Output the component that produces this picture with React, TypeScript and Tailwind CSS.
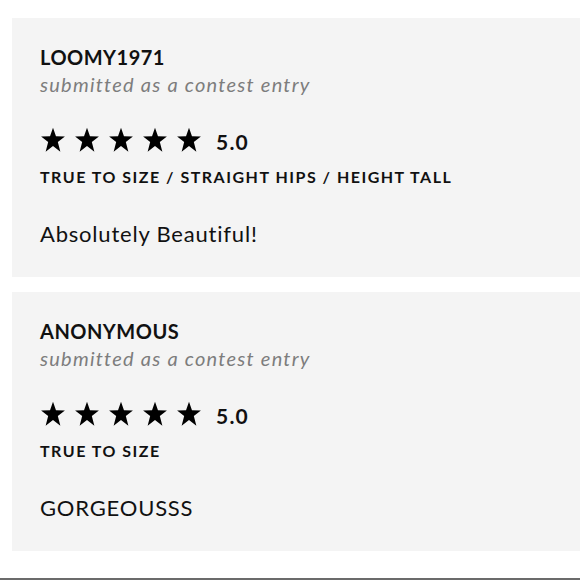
const reviews = [
  {
    name: 'LOOMY1971',
    rating: '5.0',
    fit: 'TRUE TO SIZE / STRAIGHT HIPS / HEIGHT TALL',
    body: 'Absolutely Beautiful!',
  },
  {
    name: 'ANONYMOUS',
    rating: '5.0',
    fit: 'TRUE TO SIZE',
    body: 'GORGEOUSSS',
  },
];

function Star() {
  return (
    <svg width="26" height="26" viewBox="0 0 24 24" className="shrink-0">
      <polygon
        fill="#000"
        points="12,0.8 14.75,8.6 23,8.8 16.45,13.85 18.8,22.8 12,17.6 5.2,22.8 7.55,13.85 1,8.8 9.25,8.6"
      />
    </svg>
  );
}

function ReviewCard({ name, rating, fit, body }: (typeof reviews)[number]) {
  return (
    <section className="bg-[#f4f4f4] pl-[28px] pt-[27px] pb-[29px]">
      <h3 className="text-[20px] leading-[24px] font-bold tracking-[0.5px] text-[#111]">{name}</h3>
      <p className="mt-[3px] text-[20px] leading-[24px] italic text-[#7d7d7d] tracking-[1.25px]">
        submitted as a contest entry
      </p>

      <div className="mt-[31px] flex items-center h-[26px]">
        <div className="flex gap-[8px]">
          {[0, 1, 2, 3, 4].map((i) => (
            <Star key={i} />
          ))}
        </div>
        <span className="ml-[14px] text-[21px] leading-[24px] font-bold tracking-[1.2px] text-[#111] mt-[3px]">
          {rating}
        </span>
      </div>

      <p className="mt-[14px] text-[16px] leading-[20px] font-bold tracking-[1.5px] text-[#111]">{fit}</p>

      <p className="mt-[33px] text-[22px] leading-[28px] tracking-[0.8px] text-[#111]">{body}</p>
    </section>
  );
}

export default function App() {
  return (
    <div className="w-[580px] h-[580px] bg-white overflow-hidden flex flex-col font-['Lato',sans-serif]">
      <div className="pl-[12px] pt-[18px] flex flex-col gap-[15px]">
        {reviews.map((r) => (
          <ReviewCard key={r.name} {...r} />
        ))}
      </div>
      <div className="mt-auto h-[2px] bg-[#6b6b6b]" />
    </div>
  );
}
